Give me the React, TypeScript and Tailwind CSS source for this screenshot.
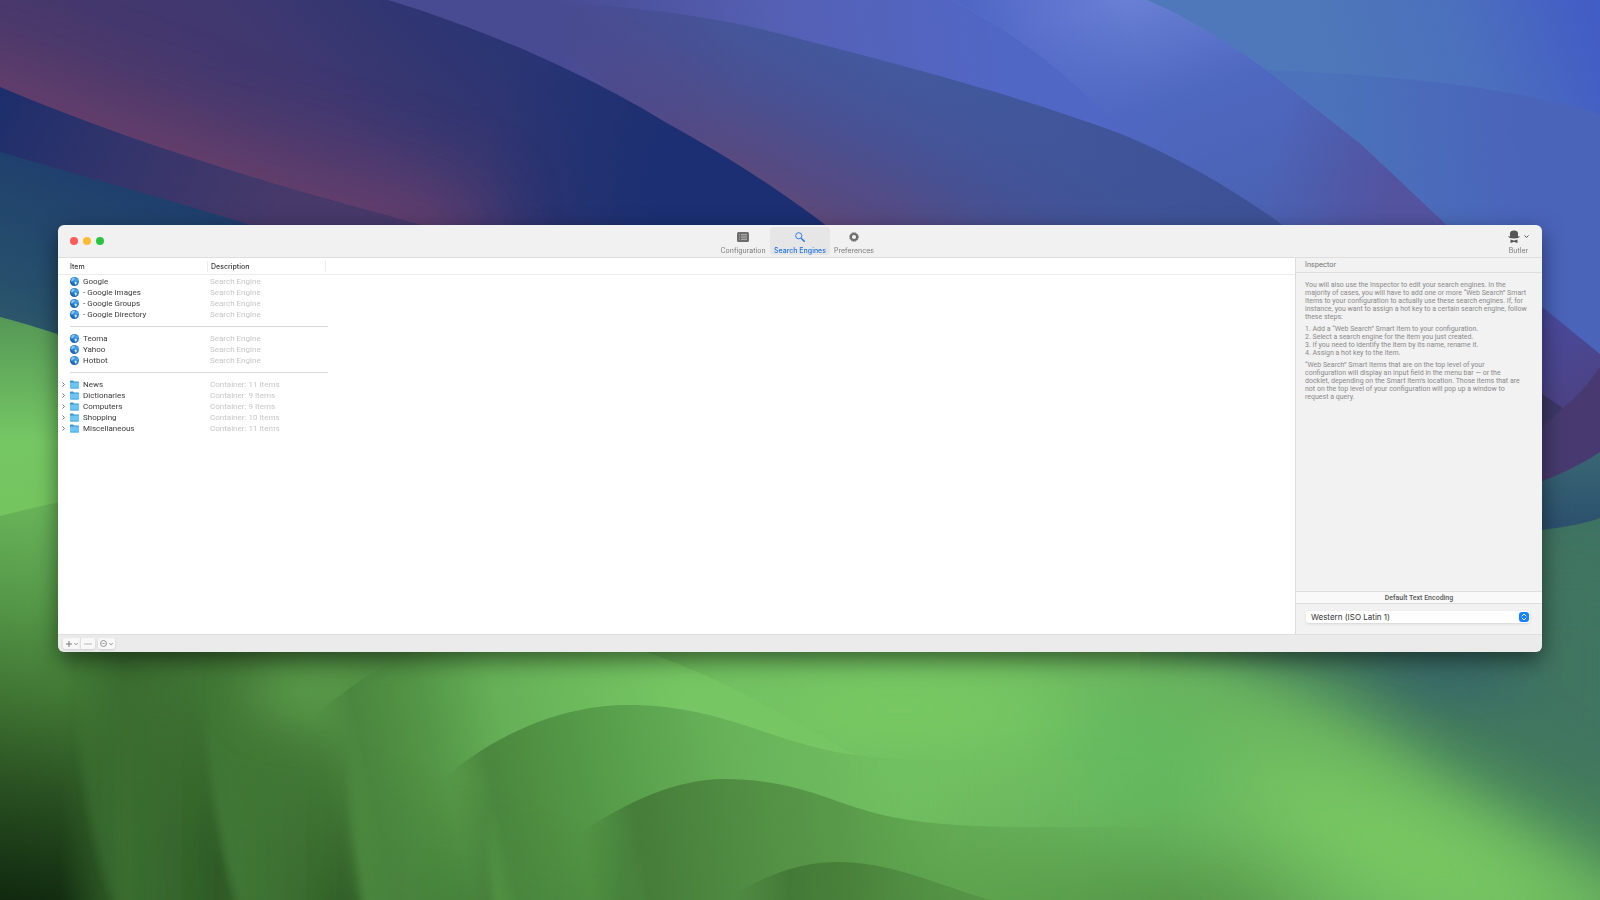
import React, { useState } from 'react';

interface SearchItem {
  name: string;
  kind: 'engine' | 'folder';
  description: string;
}

const groups: SearchItem[][] = [
  [
    { name: 'Google', kind: 'engine', description: 'Search Engine' },
    { name: '- Google Images', kind: 'engine', description: 'Search Engine' },
    { name: '- Google Groups', kind: 'engine', description: 'Search Engine' },
    { name: '- Google Directory', kind: 'engine', description: 'Search Engine' },
  ],
  [
    { name: 'Teoma', kind: 'engine', description: 'Search Engine' },
    { name: 'Yahoo', kind: 'engine', description: 'Search Engine' },
    { name: 'Hotbot', kind: 'engine', description: 'Search Engine' },
  ],
  [
    { name: 'News', kind: 'folder', description: 'Container: 11 Items' },
    { name: 'Dictionaries', kind: 'folder', description: 'Container: 9 Items' },
    { name: 'Computers', kind: 'folder', description: 'Container: 9 Items' },
    { name: 'Shopping', kind: 'folder', description: 'Container: 10 Items' },
    { name: 'Miscellaneous', kind: 'folder', description: 'Container: 11 Items' },
  ],
];

const encodings = ['Western (ISO Latin 1)', 'Western (Mac OS Roman)', 'Unicode (UTF-8)'];

const Wallpaper: React.FC = () => (
  <svg
    className="absolute inset-0 w-full h-full"
    viewBox="0 0 1600 900"
    preserveAspectRatio="xMidYMid slice"
    aria-hidden="true"
  >
    <defs>
      <linearGradient id="sky" gradientUnits="userSpaceOnUse" x1="560" y1="60" x2="1000" y2="0">
        <stop offset="0" stopColor="#484b92" />
        <stop offset="0.5" stopColor="#5560b4" />
        <stop offset="1" stopColor="#5167c6" />
      </linearGradient>
      <linearGradient id="ridge" gradientUnits="userSpaceOnUse" x1="760" y1="230" x2="850" y2="40">
        <stop offset="0" stopColor="#664871" />
        <stop offset="0.3" stopColor="#554a82" />
        <stop offset="0.65" stopColor="#475295" />
        <stop offset="1" stopColor="#43599e" />
      </linearGradient>
      <linearGradient id="ridgeFade" gradientUnits="userSpaceOnUse" x1="560" y1="0" x2="740" y2="0">
        <stop offset="0" stopColor="#494b92" />
        <stop offset="1" stopColor="#494b92" stopOpacity="0" />
      </linearGradient>
      <linearGradient id="ridgeRight" gradientUnits="userSpaceOnUse" x1="900" y1="0" x2="1250" y2="0">
        <stop offset="0" stopColor="#3d5296" stopOpacity="0" />
        <stop offset="1" stopColor="#3d5296" />
      </linearGradient>
      <linearGradient id="lilac" gradientUnits="userSpaceOnUse" x1="1120" y1="0" x2="1200" y2="230">
        <stop offset="0" stopColor="#6a80d6" />
        <stop offset="0.45" stopColor="#4f68c0" />
        <stop offset="1" stopColor="#4b62b3" />
      </linearGradient>
      <linearGradient id="lilacLeft" gradientUnits="userSpaceOnUse" x1="980" y1="60" x2="1130" y2="10">
        <stop offset="0" stopColor="#5066c5" />
        <stop offset="1" stopColor="#5066c5" stopOpacity="0" />
      </linearGradient>
      <linearGradient id="lilacFoot" gradientUnits="userSpaceOnUse" x1="1270" y1="170" x2="1390" y2="200">
        <stop offset="0" stopColor="#51539f" stopOpacity="0" />
        <stop offset="1" stopColor="#5353a0" />
      </linearGradient>
      <linearGradient id="east" gradientUnits="userSpaceOnUse" x1="1330" y1="90" x2="1600" y2="0">
        <stop offset="0" stopColor="#4e78b9" />
        <stop offset="0.5" stopColor="#4c70bd" />
        <stop offset="1" stopColor="#425bc6" />
      </linearGradient>
      <linearGradient id="eastLow" gradientUnits="userSpaceOnUse" x1="1340" y1="180" x2="1520" y2="160">
        <stop offset="0" stopColor="#4b72ba" />
        <stop offset="1" stopColor="#4a64ba" />
      </linearGradient>
      <linearGradient id="navy" gradientUnits="userSpaceOnUse" x1="200" y1="170" x2="420" y2="-40">
        <stop offset="0" stopColor="#46386c" />
        <stop offset="0.45" stopColor="#403870" />
        <stop offset="0.75" stopColor="#333671" />
        <stop offset="1" stopColor="#2b3574" />
      </linearGradient>
      <linearGradient id="navyEdge" gradientUnits="userSpaceOnUse" x1="490" y1="130" x2="670" y2="170">
        <stop offset="0" stopColor="#1b2e70" stopOpacity="0" />
        <stop offset="1" stopColor="#1b2f72" />
      </linearGradient>
      <clipPath id="navyClip">
        <path d="M0 0H388C500 34 600 82 665 122C730 158 780 190 832 230H440C270 185 130 142 0 87Z" />
      </clipPath>
      <linearGradient id="band" gradientUnits="userSpaceOnUse" x1="0" y1="95" x2="260" y2="240">
        <stop offset="0" stopColor="#1d2e6c" />
        <stop offset="0.5" stopColor="#35356b" />
        <stop offset="1" stopColor="#47396a" />
      </linearGradient>
      <linearGradient id="teal" x1="0.3" y1="0" x2="0" y2="1">
        <stop offset="0" stopColor="#1e3d6d" />
        <stop offset="0.45" stopColor="#27506c" />
        <stop offset="1" stopColor="#46755f" />
      </linearGradient>
      <linearGradient id="grass" gradientUnits="userSpaceOnUse" x1="0" y1="320" x2="0" y2="520">
        <stop offset="0" stopColor="#569957" />
        <stop offset="0.6" stopColor="#75c764" />
        <stop offset="1" stopColor="#74c45f" />
      </linearGradient>
      <linearGradient id="slope" gradientUnits="userSpaceOnUse" x1="60" y1="510" x2="0" y2="900">
        <stop offset="0" stopColor="#69b45a" />
        <stop offset="0.25" stopColor="#559848" />
        <stop offset="0.5" stopColor="#3f7332" />
        <stop offset="0.7" stopColor="#2a5222" />
        <stop offset="1" stopColor="#10290f" />
      </linearGradient>
      <linearGradient id="slopeFade" gradientUnits="userSpaceOnUse" x1="60" y1="0" x2="124" y2="0">
        <stop offset="0" stopColor="#fff" />
        <stop offset="1" stopColor="#fff" stopOpacity="0" />
      </linearGradient>
      <mask id="slopeMask" maskUnits="userSpaceOnUse" x="0" y="480" width="180" height="420">
        <rect x="0" y="480" width="180" height="420" fill="url(#slopeFade)" />
      </mask>
      <linearGradient id="field" gradientUnits="userSpaceOnUse" x1="100" y1="860" x2="760" y2="650">
        <stop offset="0" stopColor="#35652b" />
        <stop offset="0.3" stopColor="#447b38" />
        <stop offset="0.6" stopColor="#5a9c4b" />
        <stop offset="1" stopColor="#75c663" />
      </linearGradient>
      <linearGradient id="hillA" gradientUnits="userSpaceOnUse" x1="315" y1="740" x2="680" y2="660">
        <stop offset="0" stopColor="#4f8d42" stopOpacity="0" />
        <stop offset="0.12" stopColor="#4b863e" />
        <stop offset="0.3" stopColor="#549647" />
        <stop offset="0.5" stopColor="#66b057" />
        <stop offset="1" stopColor="#76c763" />
      </linearGradient>
      <linearGradient id="hillB" gradientUnits="userSpaceOnUse" x1="450" y1="800" x2="880" y2="700">
        <stop offset="0" stopColor="#4a833d" stopOpacity="0" />
        <stop offset="0.1" stopColor="#4b873e" />
        <stop offset="0.35" stopColor="#569c49" />
        <stop offset="0.65" stopColor="#68b35a" />
        <stop offset="1" stopColor="#70bf60" />
      </linearGradient>
      <linearGradient id="hillC" gradientUnits="userSpaceOnUse" x1="585" y1="860" x2="1060" y2="780">
        <stop offset="0" stopColor="#42783a" stopOpacity="0" />
        <stop offset="0.12" stopColor="#467d39" />
        <stop offset="0.4" stopColor="#549246" />
        <stop offset="0.75" stopColor="#60a64f" />
        <stop offset="1" stopColor="#64ad54" />
      </linearGradient>
      <linearGradient id="hillD" gradientUnits="userSpaceOnUse" x1="735" y1="890" x2="1000" y2="880">
        <stop offset="0" stopColor="#427537" stopOpacity="0" />
        <stop offset="0.2" stopColor="#447a38" />
        <stop offset="0.5" stopColor="#4a833b" />
        <stop offset="1" stopColor="#569548" />
      </linearGradient>
      <linearGradient id="fadeRight" x1="0" y1="0" x2="1" y2="0">
        <stop offset="0" stopColor="#fff" />
        <stop offset="0.72" stopColor="#fff" />
        <stop offset="1" stopColor="#fff" stopOpacity="0" />
      </linearGradient>
      <mask id="hillMask" maskUnits="userSpaceOnUse" x="0" y="600" width="1180" height="300">
        <rect x="0" y="600" width="1180" height="300" fill="url(#fadeRight)" />
      </mask>
      {/* Vertical folds at the foot of the hills, light on the left and dark on the right */}
      <linearGradient id="fold" x1="0" y1="0" x2="1" y2="0">
        <stop offset="0" stopColor="#4f9044" stopOpacity="0.3" />
        <stop offset="0.45" stopColor="#376a2e" stopOpacity="0.4" />
        <stop offset="0.85" stopColor="#254d1e" stopOpacity="0.6" />
        <stop offset="1" stopColor="#254d1e" stopOpacity="0.55" />
      </linearGradient>
      <linearGradient id="foldFade" gradientUnits="userSpaceOnUse" x1="215" y1="690" x2="162" y2="840">
        <stop offset="0" stopColor="#fff" stopOpacity="0" />
        <stop offset="1" stopColor="#fff" />
      </linearGradient>
      <mask id="foldMask" maskUnits="userSpaceOnUse" x="0" y="640" width="800" height="260">
        <rect x="0" y="640" width="800" height="260" fill="url(#foldFade)" />
      </mask>
      <linearGradient id="duskR" gradientUnits="userSpaceOnUse" x1="1542" y1="320" x2="1590" y2="400">
        <stop offset="0" stopColor="#4a4a9c" />
        <stop offset="1" stopColor="#4c4283" />
      </linearGradient>
      <linearGradient id="bayR" gradientUnits="userSpaceOnUse" x1="0" y1="455" x2="0" y2="530">
        <stop offset="0" stopColor="#386673" />
        <stop offset="1" stopColor="#2c4f6e" />
      </linearGradient>
      <linearGradient id="mossR" gradientUnits="userSpaceOnUse" x1="0" y1="520" x2="0" y2="860">
        <stop offset="0" stopColor="#3f7262" />
        <stop offset="1" stopColor="#46835a" />
      </linearGradient>
      <filter id="soft4" x="-20%" y="-20%" width="140%" height="140%">
        <feGaussianBlur stdDeviation="4" />
      </filter>
      <filter id="soft28" x="-50%" y="-50%" width="200%" height="200%">
        <feGaussianBlur stdDeviation="28" />
      </filter>
      <filter id="soft44" x="-50%" y="-100%" width="200%" height="300%">
        <feGaussianBlur stdDeviation="44" />
      </filter>
    </defs>

    {/* Upper sky */}
    <rect width="1600" height="900" fill="url(#sky)" />
    <path d="M953 0C1010 30 1075 75 1121 136L1300 260H1600V0Z" fill="url(#lilac)" />
    <path d="M953 0C1010 30 1075 75 1121 136L1300 260H1600V0Z" fill="url(#lilacLeft)" />
    <path d="M953 0C1010 30 1075 75 1121 136L1300 260H1600V0Z" fill="url(#lilacFoot)" />
    <path d="M1147 0C1190 18 1245 52 1290 88C1318 110 1340 128 1361 144L1448 226L1600 380V0Z" fill="url(#east)" />
    <path d="M1268 70C1390 76 1500 84 1600 114V400L1448 226L1361 144C1340 128 1310 102 1268 70Z" fill="url(#eastLow)" />
    <path d="M500 0C580 2 700 10 800 39C930 72 1030 100 1121 134C1180 158 1240 193 1292 232H780L500 0Z" fill="url(#ridge)" />
    <path d="M500 0C580 2 700 10 800 39V232H780L500 0Z" fill="url(#ridgeFade)" />
    <path d="M800 39C930 72 1030 100 1121 134C1180 158 1240 193 1292 232H900Z" fill="url(#ridgeRight)" />
    <path d="M0 0H388C500 34 600 82 665 122C730 158 780 190 832 230H0Z" fill="url(#navy)" />
    <g clipPath="url(#navyClip)">
      <path d="M388 0C500 34 600 82 665 122C730 158 780 190 832 230H450Z" fill="url(#navyEdge)" />
      <path d="M-80 80C130 165 270 205 470 250" fill="none" stroke="#80456a" strokeWidth="90" opacity="0.7" filter="url(#soft44)" />
    </g>
    <path d="M0 87C130 142 270 185 440 230V240H0Z" fill="url(#band)" />
    <path d="M0 152C90 178 170 200 260 228V480H0Z" fill="url(#teal)" />

    {/* Right shore */}
    <path d="M1530 297L1600 354V480H1530Z" fill="url(#duskR)" />
    <path d="M1530 386L1563 408L1530 460Z" fill="#3d3868" />
    <path d="M1600 367C1588 385 1575 398 1563 408L1530 440V500H1600Z" fill="#483a70" />
    <path d="M1600 452C1582 464 1562 474 1530 486V560H1600Z" fill="url(#bayR)" />
    <path d="M1600 518C1580 525 1560 528 1530 531L1100 600V900H1600Z" fill="url(#mossR)" />

    {/* Meadow */}
    <path d="M0 317C20 322 40 328 100 348V560H0Z" fill="url(#grass)" />
    <rect x="60" y="560" width="1080" height="340" fill="url(#field)" />
    <g filter="url(#soft28)">
      <path d="M740 600H1080C1200 640 1320 680 1420 760C1500 815 1570 850 1660 900V960H740Z" fill="#6ab45f" />
      <path d="M1150 580H1640V800C1560 760 1440 700 1360 660Z" fill="#407561" />
      <ellipse cx="1450" cy="672" rx="80" ry="26" fill="#366569" />
      <ellipse cx="310" cy="690" rx="60" ry="24" fill="#60a550" />
    </g>
    <g filter="url(#soft44)">
      <ellipse cx="900" cy="710" rx="190" ry="65" fill="#78ca63" />
      <ellipse cx="1140" cy="765" rx="90" ry="60" fill="#62b95f" />
      <ellipse cx="1400" cy="850" rx="190" ry="44" fill="#7bcd63" transform="rotate(24 1400 850)" />
      <ellipse cx="1080" cy="920" rx="240" ry="50" fill="#4f8c40" />
    </g>
    <path d="M0 516C20 511 40 506 180 475V900H0Z" fill="url(#slope)" mask="url(#slopeMask)" />
    <g mask="url(#hillMask)">
      <path d="M290 740C340 690 385 660 425 650H640C730 680 790 720 900 780V900H300Z" fill="url(#hillA)" />
      <path d="M430 790C490 735 560 705 628 705C700 705 745 727 800 743C850 758 900 761 960 761H1180V900H440Z" fill="url(#hillB)" />
      <path d="M570 840C630 798 680 779 724 779C790 779 830 800 861 809C910 824 960 827 1040 827H1180V900H590Z" fill="url(#hillC)" />
      <path d="M725 900C760 878 795 862 838 862C890 862 930 882 990 900Z" fill="url(#hillD)" />
    </g>
    <g mask="url(#foldMask)">
      <g filter="url(#soft4)">
        <path d="M76 640C76 740 84 840 122 920H242C216 840 208 760 200 640Z" fill="url(#fold)" />
        <path d="M200 640C208 760 216 840 242 920H366C350 840 344 760 350 640Z" fill="url(#fold)" />
        <path d="M350 640C344 760 350 840 366 920H496C486 850 486 780 520 700Z" fill="url(#fold)" opacity="0.85" />
        <path d="M520 700C486 780 486 850 496 920H640C620 880 630 840 660 780Z" fill="url(#fold)" opacity="0.6" />
      </g>
    </g>
  </svg>
);

const GlobeIcon: React.FC = () => (
  <svg className="w-[9px] h-[9px] shrink-0" viewBox="0 0 18 18" aria-hidden="true">
    <defs>
      <radialGradient id="ocean" cx="0.65" cy="0.35" r="0.75">
        <stop offset="0" stopColor="#3ea4f0" />
        <stop offset="0.6" stopColor="#1c78cc" />
        <stop offset="1" stopColor="#124f96" />
      </radialGradient>
    </defs>
    <circle cx="9" cy="9" r="9" fill="url(#ocean)" />
    <path d="M3 4C5 1 9 1 10 2L9 5L7 7L5 8L4 10L2 8Z" fill="#8cc6f0" />
    <path d="M10 9L13 10L14 12L12 15L10 15L10 13L9 11Z" fill="#cfeafb" />
    <path d="M13 3L16 6L15 8L13 6Z" fill="#5fb2ee" />
  </svg>
);

const FolderIcon: React.FC = () => (
  <svg className="w-[9px] h-[9px] shrink-0" viewBox="0 0 18 18" aria-hidden="true">
    <path d="M0 2.500Q0 1 1.500 1H6L8 3H16.500Q18 3 18 4.500V8H0Z" fill="#3796c9" />
    <path d="M0 5H18V15.500Q18 17 16.500 17H1.500Q0 17 0 15.500Z" fill="#6cc5f5" />
    <path d="M0 15H18V15.500Q18 17 16.500 17H1.500Q0 17 0 15.500Z" fill="#50aee2" />
  </svg>
);

const Chevron: React.FC<{ className?: string }> = ({ className = '' }) => (
  <svg className={className} viewBox="0 0 10 10" fill="none" stroke="currentColor" strokeWidth={2} aria-hidden="true">
    <path strokeLinecap="round" strokeLinejoin="round" d="M1.500 3.500L5 7L8.500 3.500" />
  </svg>
);

const ConfigurationIcon: React.FC = () => (
  <svg className="w-3 h-[10px]" viewBox="0 0 24 20" aria-hidden="true">
    <rect width="24" height="20" rx="3" fill="#6d6d6d" />
    <path d="M8 5.500H20M8 10H20M8 14.500H20M4 5.500H5.500M4 10H5.500M4 14.500H5.500" stroke="#d6d6d6" strokeWidth="1.500" />
  </svg>
);

const SearchIcon: React.FC = () => (
  <svg className="w-[10px] h-[10px]" viewBox="0 0 20 20" fill="none" stroke="currentColor" aria-hidden="true">
    <circle cx="7.500" cy="7.500" r="6.200" strokeWidth="1.800" />
    <path d="M12 12L14 14" strokeWidth="1.800" />
    <path d="M14 14L18.500 18.500" strokeWidth="3" strokeLinecap="round" />
  </svg>
);

const GearIcon: React.FC = () => (
  <svg className="w-[10px] h-[10px]" viewBox="0 0 20 20" fill="none" stroke="#6d6d6d" aria-hidden="true">
    <circle cx="10" cy="10" r="6.200" strokeWidth="4" />
    <circle cx="10" cy="10" r="8.800" strokeWidth="2" strokeDasharray="2.600 2.008" />
  </svg>
);

const ButlerIcon: React.FC = () => (
  <svg className="w-3 h-[13px]" viewBox="0 0 24 26" fill="#555" aria-hidden="true">
    <path d="M4 13V7Q4 1 12 1Q20 1 20 7V13Q22 13 24 12Q23 17 12 17Q1 17 0 12Q2 13 4 13Z" />
    <path d="M5 19L11 21H13L19 19V26L13 24H11L5 26Z" />
  </svg>
);

const tabs = [
  { label: 'Configuration', icon: <ConfigurationIcon />, width: 'w-[54px]' },
  { label: 'Search Engines', icon: <SearchIcon />, width: 'w-[60px]' },
  { label: 'Preferences', icon: <GearIcon />, width: 'w-[48px]' },
];

const Toolbar: React.FC = () => {
  const [active, setActive] = useState('Search Engines');

  return (
    <header className="grid grid-cols-[1fr_auto_1fr] h-[33px] shrink-0 bg-[#f1f1f1] border-b border-[#dedede]">
      <div className="flex items-center gap-[5px] pl-3">
        <button type="button" aria-label="Close" className="w-2 h-2 rounded-full bg-[#fc5b57]" />
        <button type="button" aria-label="Minimize" className="w-2 h-2 rounded-full bg-[#fdbc33]" />
        <button type="button" aria-label="Zoom" className="w-2 h-2 rounded-full bg-[#28c440]" />
      </div>
      <nav className="flex items-start pt-0.5 pr-[6px]">
        {tabs.map(tab => (
          <button
            key={tab.label}
            type="button"
            onClick={() => setActive(tab.label)}
            className={`flex flex-col items-center h-7 pt-px rounded text-[7px] leading-[9px] whitespace-nowrap ${tab.width} ${
              active === tab.label ? 'bg-[#e6e6e6] text-[#2173ea] font-medium' : 'text-[#7a7a7a]'
            }`}
          >
            <span className="flex items-center justify-center h-[18px]">{tab.icon}</span>
            <span className="pt-px">{tab.label}</span>
          </button>
        ))}
      </nav>
      <div className="flex items-start justify-end pt-0.5 pr-[13px]">
        <button type="button" className="flex flex-col items-center h-7 pt-px text-[7px] leading-[9px] text-[#7a7a7a]">
          <span className="flex items-center gap-1 h-[18px]">
            <ButlerIcon />
            <Chevron className="w-[5px] h-[5px] text-[#555]" />
          </span>
          <span className="pt-px">Butler</span>
        </button>
      </div>
    </header>
  );
};

const ItemTable: React.FC = () => (
  <main className="flex-1 min-w-0 overflow-auto bg-white">
    <table className="w-full table-fixed border-collapse text-[8px] leading-[11px] text-[#3a3a3a]">
      <colgroup>
        <col className="w-[150px]" />
        <col className="w-[118px]" />
        <col />
      </colgroup>
      <thead>
        <tr className="text-left text-[7px]">
          <th className="p-0 font-medium">
            <div className="flex items-center h-[17px] pl-3 border-b border-[#ececec]">
              <span className="flex-1 border-r border-[#ebebeb]">Item</span>
            </div>
          </th>
          <th className="p-0 font-medium">
            <div className="flex items-center h-[17px] pl-[3px] border-b border-[#ececec]">
              <span className="flex-1 border-r border-[#ebebeb]">Description</span>
            </div>
          </th>
          <th className="p-0">
            <div className="h-[17px] border-b border-[#ececec]" />
          </th>
        </tr>
        <tr className="h-px" aria-hidden="true" />
      </thead>
      {groups.map((items, index) => (
        <tbody key={items[0].name} className="font-['Roboto',sans-serif]">
          {index > 0 && (
            <tr>
              <td colSpan={3} className="p-0">
                <div className="flex items-center h-[13px] pl-3">
                  <hr className="w-[258px] border-[#dadada]" />
                </div>
              </td>
            </tr>
          )}
          {items.map(item => (
            <tr key={item.name}>
              <td className="p-0">
                <div className="flex items-center h-[11px]">
                  {item.kind === 'folder' ? (
                    <button type="button" aria-label={`Expand ${item.name}`} className="w-3 pl-[3px]">
                      <Chevron className="w-[5px] h-[5px] -rotate-90 text-[#777]" />
                    </button>
                  ) : (
                    <span className="w-3" />
                  )}
                  {item.kind === 'folder' ? <FolderIcon /> : <GlobeIcon />}
                  <span className="pl-1 whitespace-nowrap">{item.name}</span>
                </div>
              </td>
              <td className="p-0 pl-0.5 whitespace-nowrap text-[#c6c6c6]">{item.description}</td>
              <td className="p-0" />
            </tr>
          ))}
        </tbody>
      ))}
    </table>
  </main>
);

const Inspector: React.FC = () => {
  const [encoding, setEncoding] = useState(encodings[0]);

  return (
    <aside className="flex flex-col w-[247px] shrink-0 bg-[#f2f2f2] border-l border-[#dcdcdc]">
      <h2 className="h-[15px] pl-[9px] text-[7px] leading-[14px] text-[#707070] border-b border-[#dedede]">Inspector</h2>
      <div className="flex-1 flex flex-col gap-1 pt-2 pl-[9px] text-[7px] leading-[8px] text-[#8a8a8a] whitespace-nowrap font-['Roboto',sans-serif]">
        <p>
          You will also use the Inspector to edit your search engines. In the
          <br />
          majority of cases, you will have to add one or more “Web Search” Smart
          <br />
          Items to your configuration to actually use these search engines. If, for
          <br />
          instance, you want to assign a hot key to a certain search engine, follow
          <br />
          these steps:
        </p>
        <ol>
          <li>1. Add a “Web Search” Smart Item to your configuration.</li>
          <li>2. Select a search engine for the item you just created.</li>
          <li>3. If you need to identify the item by its name, rename it.</li>
          <li>4. Assign a hot key to the item.</li>
        </ol>
        <p>
          “Web Search” Smart Items that are on the top level of your
          <br />
          configuration will display an input field in the menu bar — or the
          <br />
          docklet, depending on the Smart Item's location. Those items that are
          <br />
          not on the top level of your configuration will pop up a window to
          <br />
          request a query.
        </p>
      </div>
      <label
        htmlFor="encoding"
        className="h-[13px] text-center text-[7px] leading-[12px] font-medium text-[#5a5a5a] bg-[#f9f9f9] border-y border-[#dedede] font-['Roboto',sans-serif]"
      >
        Default Text Encoding
      </label>
      <div className="h-[30px] pt-[7px] pl-[10px] pr-3">
        <div className="relative">
          <select
            id="encoding"
            value={encoding}
            onChange={e => setEncoding(e.target.value)}
            className="block w-full h-[12px] pl-[5px] appearance-none rounded-[3px] bg-white shadow-sm text-[8px] leading-[12px] text-[#333] focus:outline-none"
          >
            {encodings.map(name => (
              <option key={name} value={name}>
                {name}
              </option>
            ))}
          </select>
          <span className="absolute right-px top-px flex items-center justify-center w-[10px] h-[10px] rounded-[3px] bg-[#1580fb] pointer-events-none">
            <svg className="w-[6px] h-2" viewBox="0 0 12 16" fill="none" stroke="#fff" strokeWidth="1.800" aria-hidden="true">
              <path strokeLinecap="round" strokeLinejoin="round" d="M2 6L6 2L10 6M2 10L6 14L10 10" />
            </svg>
          </span>
        </div>
      </div>
    </aside>
  );
};

const BottomBar: React.FC = () => (
  <footer className="flex items-center h-[18px] shrink-0 pl-[5px] bg-[#ebebeb] border-t border-[#dedede] text-[#6e6e6e]">
    <button type="button" aria-label="Add" className="flex items-center justify-center gap-0.5 w-[17px] h-[11px] bg-[#f8f8f8] rounded-l-[2px] shadow-sm">
      <svg className="w-[6px] h-[6px]" viewBox="0 0 12 12" stroke="currentColor" strokeWidth="1.800" aria-hidden="true">
        <path d="M6 0V12M0 6H12" />
      </svg>
      <Chevron className="w-1 h-1" />
    </button>
    <button type="button" aria-label="Remove" className="flex items-center justify-center w-[15px] h-[11px] bg-[#f8f8f8] border-l border-[#e0e0e0] rounded-r-[2px] shadow-sm">
      <svg className="w-2 h-[2px]" viewBox="0 0 16 4" stroke="#b8b8b8" strokeWidth="2" aria-hidden="true">
        <path d="M0 2H16" />
      </svg>
    </button>
    <button type="button" aria-label="Actions" className="flex items-center justify-center gap-0.5 w-[17px] h-[11px] ml-[3px] bg-[#f8f8f8] rounded-[2px] shadow-sm">
      <svg className="w-[7px] h-[7px]" viewBox="0 0 14 14" fill="none" stroke="currentColor" strokeWidth="1.400" aria-hidden="true">
        <circle cx="7" cy="7" r="6" />
        <path d="M3.500 7H5M6.300 7H7.700M9 7H10.500" strokeWidth="1.800" />
      </svg>
      <Chevron className="w-1 h-1" />
    </button>
  </footer>
);

const App: React.FC = () => (
  <div className="relative flex flex-col h-screen px-[58px] pt-[225px] pb-[248px] overflow-hidden font-['Inter',sans-serif]">
    <Wallpaper />
    <div className="relative flex-1 flex flex-col min-h-0 rounded-[6px] overflow-hidden shadow-[0_8px_22px_rgba(0,0,0,0.5)]">
      <Toolbar />
      <div className="flex-1 flex min-h-0">
        <ItemTable />
        <Inspector />
      </div>
      <BottomBar />
    </div>
  </div>
);

export default App;
